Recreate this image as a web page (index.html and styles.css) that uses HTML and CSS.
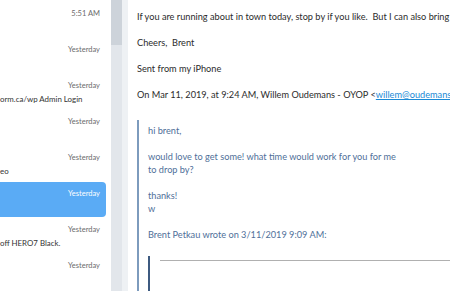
FILE: index.html
```html
<!DOCTYPE html>
<html>
<head>
    <title>Mail</title>
    <meta charset="utf-8">
    <link rel="stylesheet" href="styles.css">
</head>
<body>
<div class="list">
    <div class="item"><div class="time">5:51 AM</div></div>
    <div class="item"><div class="time">Yesterday</div></div>
    <div class="item"><div class="time">Yesterday</div><div class="subject">orm.ca/wp Admin Login</div></div>
    <div class="item"><div class="time">Yesterday</div></div>
    <div class="item"><div class="time">Yesterday</div><div class="subject">eo</div></div>
    <div class="item selected"><div class="time">Yesterday</div></div>
    <div class="item"><div class="time">Yesterday</div><div class="subject">off HERO7 Black.</div></div>
    <div class="item"><div class="time">Yesterday</div></div>
</div>
<div class="track"><div class="thumb"></div></div>
<div class="gutter"></div>
<div class="main">
    <p>If you are running about in town today, stop by if you like.&nbsp; But I can also bring some by tomorrow if that works better.</p>
    <p>Cheers,&nbsp; Brent</p>
    <p>Sent from my iPhone</p>
    <p>On Mar 11, 2019, at 9:24 AM, Willem Oudemans - OYOP &lt;<a href="#">willem@oudemans.ca</a>&gt; wrote:</p>
    <blockquote class="quote">
        <p>hi brent,</p>
        <p>would love to get some! what time would work for you for me<br>to drop by?</p>
        <p>thanks!<br>w</p>
        <p>Brent Petkau wrote on 3/11/2019 9:09 AM:</p>
        <blockquote class="quote inner">
            <hr>
        </blockquote>
    </blockquote>
</div>
</body>
</html>
```

FILE: styles.css
```css
html, body {
    height: 100%;
}

body {
    margin: 0;
    display: flex;
    overflow: hidden;
    font-family: Lato, "Liberation Sans", sans-serif;
    background: #fff;
}

.list {
    width: 111px;
    flex-shrink: 0;
    padding-top: 2px;
    overflow: hidden;
}

.item {
    height: 35px;
    margin: 0 5px 1px 0;
    padding: 7px 6px 0 0;
    box-sizing: border-box;
    border-radius: 0 4px 4px 0;
}

.item.selected {
    background: #5aabf5;
}

.time {
    font-size: 7.5px;
    line-height: 10px;
    text-align: right;
    color: #6b6b6b;
}

.selected .time {
    color: #fff;
}

.subject {
    margin-top: 3px;
    font-size: 7.9px;
    line-height: 10px;
    color: #333;
    white-space: nowrap;
}

.track {
    width: 11px;
    flex-shrink: 0;
    background: #e2e6eb;
}

.thumb {
    height: 45px;
    background: #cdd3da;
}

.gutter {
    width: 6px;
    flex-shrink: 0;
    background: #eef1f4;
}

.main {
    flex: 1;
    min-width: 0;
    padding: 10px 0 0 9px;
    overflow: hidden;
    font-size: 9.2px;
    line-height: 13px;
    color: #2b2b2b;
    white-space: nowrap;
}

.main p {
    margin: 0 0 13px;
}

.main a {
    color: #1b8ad6;
}

.quote {
    margin: 19px 0 0;
    padding: 4px 0 0 9px;
    border-left: 2px solid #7d9bbd;
    color: #4f6f99;
    height: 400px;
}

.quote.inner {
    margin-top: 15px;
    padding: 4px 0 0 10px;
    border-left-color: #3d5a80;
}

.inner hr {
    margin: 0;
    border: 0;
    border-top: 1px solid #b0b0b0;
}
```
